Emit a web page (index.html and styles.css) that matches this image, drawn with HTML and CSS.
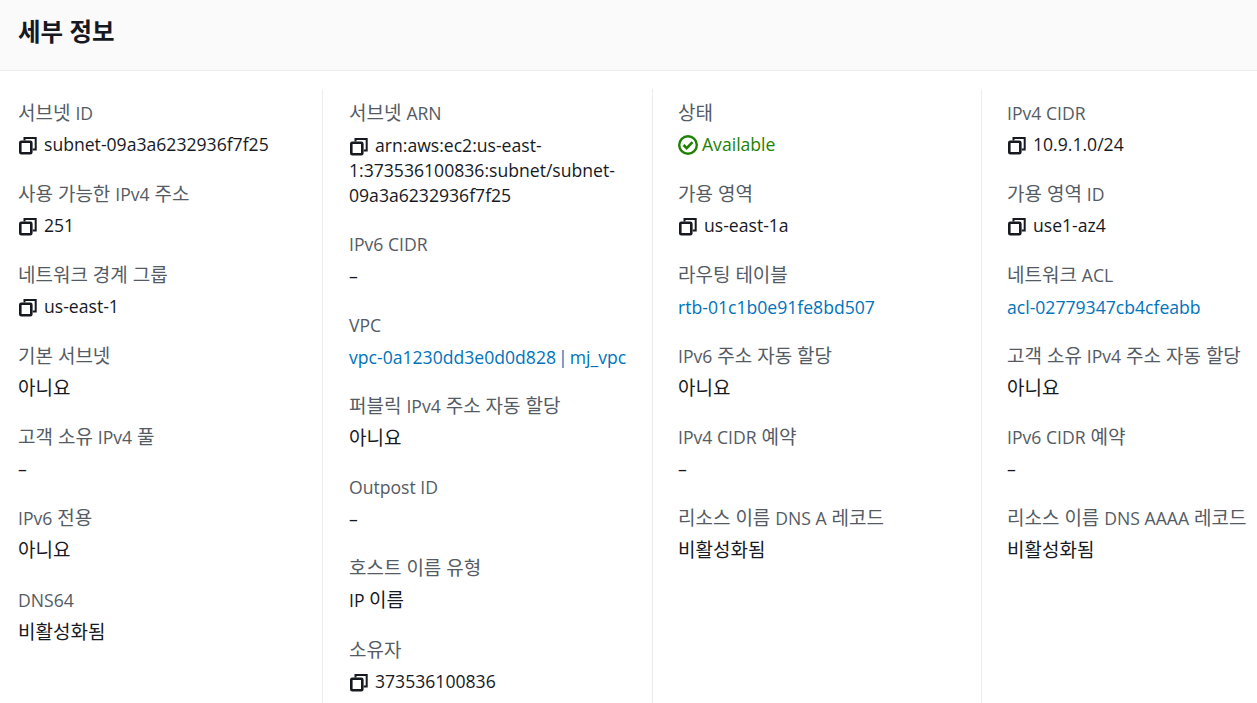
FILE: index.html
```html
<!DOCTYPE html>
<html lang="ko">
<head>
  <meta charset="UTF-8" />
  <meta name="viewport" content="width=device-width, initial-scale=1.0" />
  <title>세부 정보</title>
  <link rel="stylesheet" href="styles.css">
</head>
<body>
  <svg class="defs" width="0" height="0">
    <symbol id="copy" viewBox="0 0 19 18">
      <path d="M6.5 3.5V1h11.2v11.5h-3" fill="none" stroke="currentColor" stroke-width="2" />
      <rect x="2.3" y="4.8" width="11" height="11.5" rx="1" fill="none" stroke="currentColor" stroke-width="2.6" />
    </symbol>
  </svg>

  <header class="panel-header">
    <h2>세부 정보</h2>
  </header>

  <div class="details">
    <div class="col">
      <div class="item"><div class="label">서브넷 <span class="en">ID</span></div><div class="value"><svg class="icon"><use href="#copy"/></svg>subnet-09a3a6232936f7f25</div></div>
      <div class="item"><div class="label">사용 가능한 <span class="en">IPv4</span> 주소</div><div class="value"><svg class="icon"><use href="#copy"/></svg>251</div></div>
      <div class="item"><div class="label">네트워크 경계 그룹</div><div class="value"><svg class="icon"><use href="#copy"/></svg>us-east-1</div></div>
      <div class="item"><div class="label">기본 서브넷</div><div class="value"><span class="ko">아니요</span></div></div>
      <div class="item"><div class="label">고객 소유 <span class="en">IPv4</span> 풀</div><div class="value">–</div></div>
      <div class="item"><div class="label"><span class="en">IPv6</span> 전용</div><div class="value"><span class="ko">아니요</span></div></div>
      <div class="item"><div class="label"><span class="en">DNS64</span></div><div class="value"><span class="ko">비활성화됨</span></div></div>
    </div>

    <div class="col">
      <div class="item"><div class="label">서브넷 <span class="en">ARN</span></div><div class="value wrap"><svg class="icon"><use href="#copy"/></svg>arn:aws:ec2:us-east-1:373536100836:subnet/subnet-09a3a6232936f7f25</div></div>
      <div class="item"><div class="label"><span class="en">IPv6 CIDR</span></div><div class="value">–</div></div>
      <div class="item"><div class="label"><span class="en">VPC</span></div><div class="value"><a href="#" class="vpc-link">vpc-0a1230dd3e0d0d828 | mj_vpc</a></div></div>
      <div class="item"><div class="label">퍼블릭 <span class="en">IPv4</span> 주소 자동 할당</div><div class="value"><span class="ko">아니요</span></div></div>
      <div class="item"><div class="label"><span class="en">Outpost ID</span></div><div class="value">–</div></div>
      <div class="item"><div class="label">호스트 이름 유형</div><div class="value">IP <span class="ko">이름</span></div></div>
      <div class="item"><div class="label">소유자</div><div class="value"><svg class="icon"><use href="#copy"/></svg>373536100836</div></div>
    </div>

    <div class="col">
      <div class="item"><div class="label">상태</div><div class="value ok">
        <svg class="icon status" viewBox="0 0 20 20"><circle cx="10" cy="10" r="8.8" fill="none" stroke="currentColor" stroke-width="2.4"/><path d="M5.5 10l3.2 3.2 5.8-6" fill="none" stroke="currentColor" stroke-width="2.6"/></svg>Available</div></div>
      <div class="item"><div class="label">가용 영역</div><div class="value"><svg class="icon"><use href="#copy"/></svg>us-east-1a</div></div>
      <div class="item"><div class="label">라우팅 테이블</div><div class="value"><a href="#">rtb-01c1b0e91fe8bd507</a></div></div>
      <div class="item"><div class="label"><span class="en">IPv6</span> 주소 자동 할당</div><div class="value"><span class="ko">아니요</span></div></div>
      <div class="item"><div class="label"><span class="en">IPv4 CIDR</span> 예약</div><div class="value">–</div></div>
      <div class="item"><div class="label">리소스 이름 <span class="en">DNS A</span> 레코드</div><div class="value"><span class="ko">비활성화됨</span></div></div>
    </div>

    <div class="col">
      <div class="item"><div class="label"><span class="en">IPv4 CIDR</span></div><div class="value"><svg class="icon"><use href="#copy"/></svg>10.9.1.0/24</div></div>
      <div class="item"><div class="label">가용 영역 <span class="en">ID</span></div><div class="value"><svg class="icon"><use href="#copy"/></svg>use1-az4</div></div>
      <div class="item"><div class="label">네트워크 <span class="en">ACL</span></div><div class="value"><a href="#">acl-02779347cb4cfeabb</a></div></div>
      <div class="item"><div class="label">고객 소유 <span class="en">IPv4</span> 주소 자동 할당</div><div class="value"><span class="ko">아니요</span></div></div>
      <div class="item"><div class="label"><span class="en">IPv6 CIDR</span> 예약</div><div class="value">–</div></div>
      <div class="item"><div class="label">리소스 이름 <span class="en">DNS AAAA</span> 레코드</div><div class="value"><span class="ko">비활성화됨</span></div></div>
    </div>
  </div>
</body>
</html>
```
FILE: styles.css
```css
html, body {
  height: 100%;
}
body {
  margin: 0;
  overflow: hidden;
  display: flex;
  flex-direction: column;
  font-family: "Open Sans", "Noto Sans CJK KR", sans-serif;
  font-size: 17.6px;
  color: #16191f;
  background: white;
}
.defs {
  position: absolute;
}
.panel-header {
  height: 71px;
  box-sizing: border-box;
  padding: 0 18px;
  display: flex;
  align-items: center;
  background: #fafafa;
  border-bottom: 1px solid #eaeded;
  flex-shrink: 0;
}
.panel-header h2 {
  margin: 0 0 10px;
  font-size: 24.5px;
  font-weight: 700;
}
.details {
  flex: 1;
  display: grid;
  grid-template-columns: 323px 330px 329px 275px;
  margin-top: 18px;
}
.col {
  padding: 13px 0 0 25px;
  border-right: 1px solid #eaeded;
}
.col:first-child {
  padding-left: 18px;
}
.col:nth-child(2) {
  padding-left: 26px;
}
.col:last-child {
  border-right: none;
}
.item {
  margin-bottom: 27.1px;
}
.label {
  color: #545b64;
  font-size: 19px;
  line-height: 22px;
  margin-bottom: 10px;
  white-space: nowrap;
}
.en {
  font-size: 17.6px;
}
.ko {
  font-size: 19px;
}
.value {
  line-height: 22px;
  display: block;
  padding-right: 20px;
  white-space: nowrap;
}
.value:has(.icon) {
  margin-top: -1px;
  padding-bottom: 1px;
}
.value.wrap {
  white-space: normal;
  line-height: 25px;
  overflow-wrap: anywhere;
  margin-top: -1px;
  padding-bottom: 0;
  margin-bottom: -2px;
}
.vpc-link {
  word-spacing: -2.5px;
}
.icon {
  width: 19px;
  height: 18px;
  margin-right: 7px;
  vertical-align: -4px;
  color: #16191f;
}
.icon.status {
  width: 20px;
  height: 20px;
  margin-right: 4px;
  color: #1d8102;
  vertical-align: -4px;
}
.ok {
  color: #1d8102;
}
a {
  color: #0073bb;
  text-decoration: none;
}
```
